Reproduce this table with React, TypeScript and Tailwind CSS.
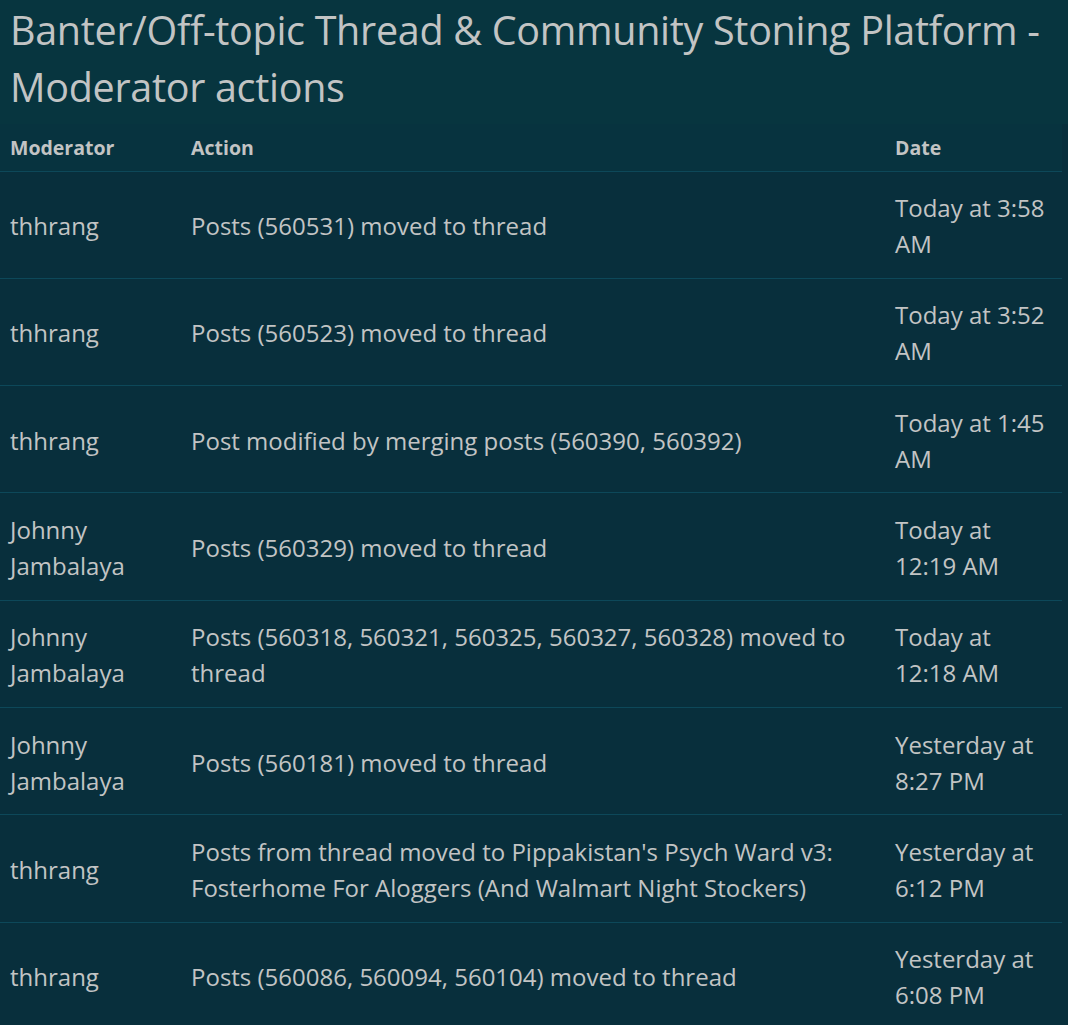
import React from 'react';

type LogRow = { mod: string; action: string; date: string };

const rows: LogRow[] = [
  { mod: 'thhrang', action: 'Posts (560531) moved to thread', date: 'Today at 3:58 AM' },
  { mod: 'thhrang', action: 'Posts (560523) moved to thread', date: 'Today at 3:52 AM' },
  { mod: 'thhrang', action: 'Post modified by merging posts (560390, 560392)', date: 'Today at 1:45 AM' },
  { mod: 'Johnny Jambalaya', action: 'Posts (560329) moved to thread', date: 'Today at 12:19 AM' },
  {
    mod: 'Johnny Jambalaya',
    action: 'Posts (560318, 560321, 560325, 560327, 560328) moved to thread',
    date: 'Today at 12:18 AM',
  },
  { mod: 'Johnny Jambalaya', action: 'Posts (560181) moved to thread', date: 'Yesterday at 8:27 PM' },
  {
    mod: 'thhrang',
    action: "Posts from thread moved to Pippakistan's Psych Ward v3: Fosterhome For Aloggers (And Walmart Night Stockers)",
    date: 'Yesterday at 6:12 PM',
  },
  { mod: 'thhrang', action: 'Posts (560086, 560094, 560104) moved to thread', date: 'Yesterday at 6:08 PM' },
];

export default function App() {
  return (
    <div
      className="min-h-screen w-full bg-[#082f3c] text-[#c2c4c4] overflow-hidden"
      style={{ fontFamily: '"Open Sans", "Noto Sans", sans-serif' }}
    >
      {/* Page title */}
      <div className="bg-[#07353f] px-[10px] pt-[2px] pb-[8px]">
        <h1 className="text-[39.5px] leading-[57px] font-normal tracking-[-0.3px]">
          Banter/Off-topic Thread &amp; Community Stoning Platform - Moderator actions
        </h1>
      </div>

      <div className="pr-[6px]">
        <table className="w-full table-fixed border-collapse">
          <colgroup>
            <col className="w-[181px]" />
            <col className="w-[704px]" />
            <col />
          </colgroup>
          <thead>
            <tr className="bg-[#07333f] border-b border-[#0d4859]">
              <th className="text-left text-[19.5px] font-bold pl-[10px] h-[47px]">Moderator</th>
              <th className="text-left text-[19.5px] font-bold pl-[10px]">Action</th>
              <th className="text-left text-[19.5px] font-bold pl-[10px]">Date</th>
            </tr>
          </thead>
          <tbody className="text-[24px] leading-[36px]">
            {rows.map((r, i) => (
              <tr key={i} className="border-b border-[#0d4859] h-[107.3px]">
                <td className="pl-[10px] pr-[10px] pt-[3px] align-middle">{r.mod}</td>
                <td className="pl-[10px] pr-[20px] pt-[3px] align-middle">{r.action}</td>
                <td className="pl-[10px] pr-[4px] pt-[3px] align-middle">{r.date}</td>
              </tr>
            ))}
          </tbody>
        </table>
      </div>
    </div>
  );
}
